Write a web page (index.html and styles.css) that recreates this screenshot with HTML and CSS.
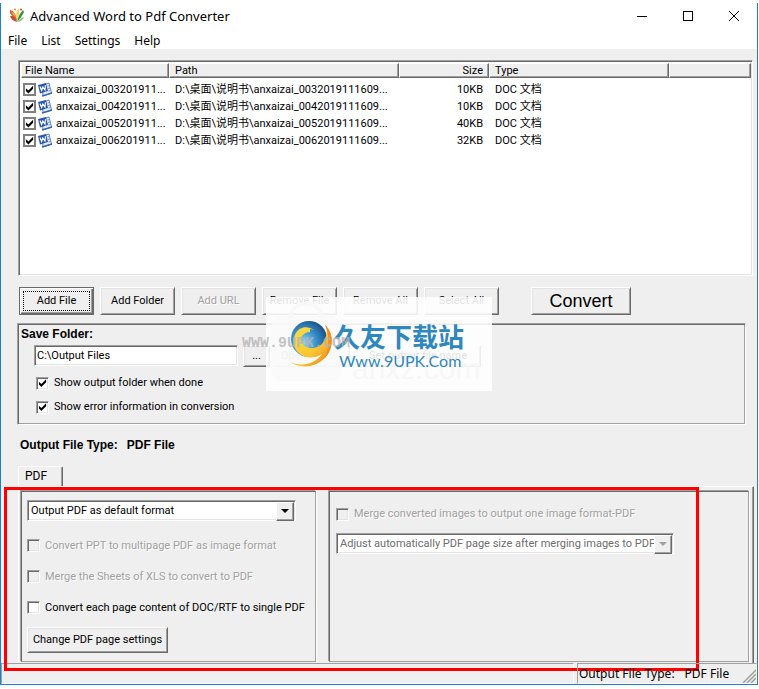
FILE: index.html
```html
<!DOCTYPE html>
<html lang="en">

<head>
    <meta charset="utf-8">
    <title>Advanced Word to Pdf Converter</title>
    <link rel="stylesheet" href="styles.css">
</head>

<body>
    <svg class="defs" width="0" height="0">
        <symbol id="word-icon" viewBox="0 0 14 15">
            <path d="M4 3 L11 1 L13.500 11 L5 14 Z" fill="#e8effa" stroke="#5f86c6"/>
            <path d="M9.500 4 L11.500 3.500 M10 6.500 L12 6 M10.500 9 L12.500 8.500" stroke="#6d94d2"/>
            <path d="M0 3 L8 1 L10 9 L2 11.500 Z" fill="#2855ab"/>
            <path d="M2 4.500 L3.600 8.500 L4.800 5 L7 8 L7.400 3.200" fill="none" stroke="#fff" stroke-width="1.200"/>
            <path d="M4 14 L14 11" stroke="#3563b4" stroke-width="1.500"/>
        </symbol>
    </svg>

    <div class="window">
        <header class="titlebar">
            <svg class="app-icon" width="16" height="16" viewBox="0 0 16 16">
                <path d="M8 14 C4 13 2 11 1 8 L4 8 C6 9 7 11 8 14 Z" fill="#d5452f"/>
                <path d="M8 13 C5 10 3 8 1 5 L1 2 L4 3 C6 6 8 9 8 13 Z" fill="#d9532f"/>
                <path d="M2 3 L5 5 L7 10 L4 7 Z" fill="#f0b13c"/>
                <path d="M8 12 C7 8 7 5 8 2 L10 1 C10 5 10 9 8 12 Z" fill="#f3d35a"/>
                <path d="M8 14 C9 9 11 5 14 2 L15 4 C13 8 11 11 8 14 Z" fill="#2f9440"/>
                <path d="M9 14 C11 11 13 10 15 9 L14 11 C12 13 10 14 9 14 Z" fill="#7bbd55"/>
                <circle cx="6" cy="1.500" r="1" fill="#e9822c"/>
                <circle cx="12" cy="1.500" r="1" fill="#d93a2b"/>
            </svg>
            <span class="title">Advanced Word to Pdf Converter</span>
            <div class="window-buttons">
                <button type="button"><svg width="12" height="12"><path d="M1 6.500 H11" stroke="#000"/></svg></button>
                <button type="button"><svg width="12" height="12"><rect x="1.500" y="1.500" width="9" height="9" fill="none" stroke="#000"/></svg></button>
                <button type="button"><svg width="12" height="12"><path d="M1 1 L11 11 M11 1 L1 11" stroke="#000"/></svg></button>
            </div>
        </header>

        <nav class="menu">
            <button type="button">File</button>
            <button type="button">List</button>
            <button type="button">Settings</button>
            <button type="button">Help</button>
        </nav>

        <main class="content">
            <div class="file-list">
                <table>
                    <colgroup>
                        <col class="col-name">
                        <col class="col-path">
                        <col class="col-size">
                        <col class="col-type">
                        <col>
                    </colgroup>
                    <thead>
                        <tr>
                            <th>File Name</th>
                            <th>Path</th>
                            <th class="num">Size</th>
                            <th>Type</th>
                            <th></th>
                        </tr>
                    </thead>
                    <tbody>
                        <tr>
                            <td><div class="file"><input type="checkbox" id="file1" checked><svg width="14" height="15"><use href="#word-icon"/></svg><label for="file1">anxaizai_003201911...</label></div></td>
                            <td>D:\桌面\说明书\anxaizai_0032019111609...</td>
                            <td class="num">10KB</td>
                            <td>DOC 文档</td>
                            <td></td>
                        </tr>
                        <tr>
                            <td><div class="file"><input type="checkbox" id="file2" checked><svg width="14" height="15"><use href="#word-icon"/></svg><label for="file2">anxaizai_004201911...</label></div></td>
                            <td>D:\桌面\说明书\anxaizai_0042019111609...</td>
                            <td class="num">10KB</td>
                            <td>DOC 文档</td>
                            <td></td>
                        </tr>
                        <tr>
                            <td><div class="file"><input type="checkbox" id="file3" checked><svg width="14" height="15"><use href="#word-icon"/></svg><label for="file3">anxaizai_005201911...</label></div></td>
                            <td>D:\桌面\说明书\anxaizai_0052019111609...</td>
                            <td class="num">40KB</td>
                            <td>DOC 文档</td>
                            <td></td>
                        </tr>
                        <tr>
                            <td><div class="file"><input type="checkbox" id="file4" checked><svg width="14" height="15"><use href="#word-icon"/></svg><label for="file4">anxaizai_006201911...</label></div></td>
                            <td>D:\桌面\说明书\anxaizai_0062019111609...</td>
                            <td class="num">32KB</td>
                            <td>DOC 文档</td>
                            <td></td>
                        </tr>
                    </tbody>
                </table>
            </div>

            <div class="toolbar">
                <button type="button" class="btn default">Add File</button>
                <button type="button" class="btn">Add Folder</button>
                <button type="button" class="btn" disabled>Add URL</button>
                <button type="button" class="btn">Remove File</button>
                <button type="button" class="btn">Remove All</button>
                <button type="button" class="btn">Select All</button>
                <button type="button" class="btn convert">Convert</button>
            </div>

            <section class="save-box">
                <label class="heading" for="folder">Save Folder:</label>
                <div class="folder-row">
                    <input type="text" id="folder" value="C:\Output Files">
                    <button type="button" class="btn browse">...</button>
                    <button type="button" class="btn open">Open</button>
                    <button type="button" class="btn set-name">Set output file name</button>
                </div>
                <label class="check"><input type="checkbox" checked>Show output folder when done</label>
                <label class="check"><input type="checkbox" checked>Show error information in conversion</label>

                <svg class="watermark" width="250" height="94" viewBox="0 0 250 94">
                    <defs>
                        <radialGradient id="globe" cx="0.350" cy="0.600" r="0.700">
                            <stop offset="0" stop-color="#8fd4f3"/>
                            <stop offset="0.500" stop-color="#3a92cc"/>
                            <stop offset="1" stop-color="#174b86"/>
                        </radialGradient>
                        <linearGradient id="swoosh" x1="0" y1="0" x2="1" y2="1">
                            <stop offset="0" stop-color="#fbe04a"/>
                            <stop offset="0.600" stop-color="#f9c52e"/>
                            <stop offset="1" stop-color="#ea7a1c"/>
                        </linearGradient>
                    </defs>
                    <rect x="24" y="0" width="226" height="94" fill="#fff" fill-opacity="0.880"/>
                    <rect x="29" y="19" width="71" height="65" rx="12" fill="#f8f8f8" fill-opacity="0.700"/>
                    <path d="M48 22 C48 2 80 2 80 22" fill="none" stroke="#f8f8f8" stroke-width="4"/>
                    <text x="110" y="82" class="ghost">anxz.com</text>
                    <circle cx="67" cy="42" r="18" fill="url(#globe)"/>
                    <path d="M53 51 C48 36 60 25 72 33 C62 29 55 38 60 46 C65 54 78 52 82 44 C86 37 85 31 83 28 C92 36 92 51 83 61 C72 72 57 71 48 65 C60 70 73 67 80 57 C70 64 57 60 53 51 Z" fill="url(#swoosh)"/>
                    <path d="M83 28 C92 36 92 51 83 61 C88 49 87 37 83 28 Z" fill="#f28b20"/>
                    <path d="M56 49 C55 40 60 33 68 33" fill="none" stroke="#f9d640" stroke-width="4"/>
                    <text x="92" y="50" class="brand">久友下载站</text>
                    <text x="97" y="70" class="site">Www.9UPK.Com</text>
                    <text x="0" y="50" class="stamp">WWW.9UPK.COM</text>
                </svg>
            </section>

            <div class="output-type"><span>Output File Type:</span><span>PDF File</span></div>

            <div class="tabs"><button type="button" class="tab">PDF</button></div>

            <div class="pane">
                <section class="group left">
                    <div class="combo">
                        <select>
                            <option>Output PDF as default format</option>
                        </select>
                    </div>
                    <label class="check"><input type="checkbox" disabled>Convert PPT to multipage PDF as image format</label>
                    <label class="check"><input type="checkbox" disabled>Merge the Sheets of XLS to convert to PDF</label>
                    <label class="check"><input type="checkbox">Convert each page content of DOC/RTF to single PDF</label>
                    <button type="button" class="btn page-settings">Change PDF page settings</button>
                </section>
                <section class="group right">
                    <label class="check"><input type="checkbox" disabled>Merge converted images to output one image format-PDF</label>
                    <div class="combo wide">
                        <select disabled>
                            <option>Adjust automatically PDF page size after merging images to PDF</option>
                        </select>
                    </div>
                </section>
                <div class="highlight"></div>
            </div>
        </main>

        <footer class="statusbar">
            <div class="status-main"></div>
            <div class="status-type"><span>Output File Type:</span><span>PDF File</span>
                <svg class="grip" width="14" height="14"><path d="M1 14 L14 1 M5 14 L14 5 M9 14 L14 9" stroke="#a0a0a0" stroke-width="1.500"/></svg>
            </div>
        </footer>
    </div>
</body>

</html>
```

FILE: styles.css
```css
* {
    box-sizing: border-box;
}

body {
    margin: 0;
    padding: 3px 1px 4px 0;
    min-height: 100vh;
    display: flex;
    background: #fff;
    color: #000;
    font-family: Roboto, "Noto Sans CJK SC", sans-serif;
    font-size: 11px;
    line-height: 16px;
}

button,
input,
select {
    font: inherit;
    color: inherit;
    margin: 0;
}

.defs {
    position: absolute;
}

.window {
    flex: 1;
    display: flex;
    flex-direction: column;
    border: 1px solid #1e80cd;
    border-top: none;
    background: #efefef;
}

/* title bar and menu */
.titlebar {
    display: flex;
    align-items: center;
    height: 26px;
    padding-left: 8px;
    background: #fff;
}

.title {
    flex: 1;
    margin-left: 5px;
    font-family: "Noto Sans", sans-serif;
    font-size: 13px;
}

.window-buttons {
    display: flex;
}

.window-buttons button {
    display: flex;
    align-items: center;
    justify-content: center;
    width: 46px;
    height: 26px;
    padding: 0;
    border: none;
    background: none;
}

.menu {
    display: flex;
    gap: 14px;
    height: 20px;
    padding: 4px 0 0 7px;
    background: #fff;
}

.menu button {
    padding: 0;
    border: none;
    background: none;
    font-family: "Noto Sans", sans-serif;
    font-size: 12px;
}

.content {
    flex: 1;
    display: flex;
    flex-direction: column;
    padding: 11px 4px 0 17px;
}

/* file list */
.file-list {
    flex: 1;
    min-height: 160px;
    border: 1px solid;
    border-color: #a0a0a0 #fff #fff #a0a0a0;
    box-shadow: inset 1px 1px #696969, inset -1px -1px #e3e3e3;
    padding: 2px 1px 1px 2px;
    background: #fff;
}

table {
    width: 100%;
    table-layout: fixed;
    border-collapse: separate;
    border-spacing: 0;
}

.col-name {
    width: 148px;
}

.col-path {
    width: 230px;
}

.col-size {
    width: 90px;
}

.col-type {
    width: 180px;
}

th {
    height: 15px;
    padding: 0 5px;
    line-height: 13px;
    text-align: left;
    font-weight: normal;
    background: #efefef;
    border: 1px solid;
    border-color: #fff #696969 #696969 #fff;
    box-shadow: inset -1px -1px #a0a0a0;
}

th:first-child {
    padding-left: 3px;
}

td {
    height: 17px;
    padding: 0 6px;
    line-height: 17px;
    white-space: nowrap;
}

td:first-child {
    padding: 0 0 0 2px;
}

tbody::before {
    content: "";
    display: block;
    height: 3px;
}

.num {
    text-align: right;
}

.file {
    display: flex;
    align-items: center;
    gap: 4px;
}

.file svg {
    margin-left: -2px;
}

/* check boxes */
input[type="checkbox"] {
    appearance: none;
    flex: none;
    width: 13px;
    height: 13px;
    border: 1px solid;
    border-color: #a0a0a0 #fff #fff #a0a0a0;
    box-shadow: inset 1px 1px #696969, inset -1px -1px #e3e3e3;
    background: #fff;
    display: flex;
    align-items: center;
    justify-content: center;
}

input[type="checkbox"]:checked::before {
    content: "";
    width: 9px;
    height: 9px;
    background: #000;
    clip-path: polygon(10% 35%, 38% 60%, 90% 8%, 90% 42%, 38% 95%, 10% 68%);
}

input[type="checkbox"]:disabled {
    background: #efefef;
}

.file input[type="checkbox"] {
    border: 2px solid #808080;
    box-shadow: none;
}

.check {
    display: flex;
    align-items: center;
    gap: 5px;
    white-space: nowrap;
}

.check:has(:disabled) {
    color: #a0a0a0;
    text-shadow: 1px 1px #fff;
}

/* buttons */
.btn {
    padding: 0;
    background: #efefef;
    border: 1px solid;
    border-color: #fff #696969 #696969 #fff;
    box-shadow: inset 1px 1px #e3e3e3, inset -1px -1px #a0a0a0;
    white-space: nowrap;
}

.btn:disabled {
    color: #a0a0a0;
    text-shadow: 1px 1px #fff;
}

.toolbar {
    display: flex;
    gap: 6px;
    margin-top: 11px;
    padding-left: 1px;
}

.toolbar .btn {
    width: 75px;
    height: 28px;
}

.toolbar .default {
    border-color: #696969;
    box-shadow: inset 1px 1px #fff, inset -1px -1px #696969, inset -2px -2px #a0a0a0;
    outline: 1px dotted #000;
    outline-offset: -5px;
}

.toolbar .convert {
    width: 100px;
    margin-left: 26px;
    font-family: "Liberation Sans", sans-serif;
    font-size: 18px;
}

/* save folder */
.save-box {
    position: relative;
    margin: 8px 7px 0 -1px;
    padding: 2px 3px 5px;
    border: 1px solid;
    border-color: #a0a0a0 #fff #fff #a0a0a0;
    box-shadow: inset 1px 1px #696969, inset -1px -1px #a0a0a0;
}

.heading {
    display: block;
    font-family: "Liberation Sans", sans-serif;
    font-size: 12px;
    font-weight: bold;
}

.folder-row {
    display: flex;
    align-items: flex-start;
    gap: 5px;
    margin: 3px 0 4px 13px;
}

.folder-row input {
    width: 204px;
    height: 21px;
    padding: 0 2px;
    border: 1px solid;
    border-color: #a0a0a0 #fff #fff #a0a0a0;
    box-shadow: inset 1px 1px #696969, inset -1px -1px #e3e3e3;
    background: #fff;
}

.folder-row .btn {
    height: 22px;
}

.folder-row .browse {
    width: 27px;
}

.folder-row .open {
    width: 75px;
    padding-left: 5px;
    text-align: left;
}

.folder-row .set-name {
    width: 126px;
}

.save-box .check {
    height: 24px;
    margin-left: 15px;
}

.watermark {
    position: absolute;
    left: 224px;
    top: -27px;
    pointer-events: none;
}

.ghost {
    font-family: "Liberation Sans", sans-serif;
    font-size: 30px;
    fill: #f7f7f7;
}

.brand {
    font-family: "Noto Sans CJK SC", sans-serif;
    font-size: 26px;
    font-weight: bold;
    fill: #2f88bd;
}

.site {
    font-family: Lato, sans-serif;
    font-size: 16px;
    fill: #2f88bd;
}

.stamp {
    font-family: "Liberation Mono", monospace;
    font-size: 15px;
    font-weight: bold;
    fill: #b4b4b4;
    fill-opacity: 0.8;
}

.output-type {
    display: flex;
    gap: 9px;
    margin: 12px 0 13px 2px;
    font-family: "Liberation Sans", sans-serif;
    font-size: 12px;
    font-weight: bold;
}

/* tab control */
.tab {
    display: block;
    width: 45px;
    height: 20px;
    padding: 0 0 2px 6px;
    text-align: left;
    font-size: 12px;
    background: #efefef;
    border: 1px solid;
    border-color: #fff #696969 transparent #fff;
    border-bottom: none;
    border-radius: 2px 2px 0 0;
    box-shadow: inset -1px 0 #a0a0a0;
}

.pane {
    position: relative;
    display: flex;
    gap: 13px;
    height: 177px;
    margin-right: -1px;
    padding: 4px 4px 1px 2px;
    border: 1px solid;
    border-color: #fff #696969 transparent #fff;
    border-bottom: none;
    box-shadow: inset -1px 0 #a0a0a0;
}

.group {
    border: 1px solid;
    border-color: #696969 #a0a0a0 #a0a0a0 #696969;
    box-shadow: 1px 0 #fff, -1px -1px #a0a0a0;
}

.left {
    width: 295px;
    padding: 8px 5px;
}

.left .combo {
    margin-bottom: 9px;
}

.left .check {
    height: 31px;
}

.right {
    flex: 1;
    padding: 14px 6px;
}

.right .combo {
    margin-top: 11px;
}

.combo {
    position: relative;
    width: 269px;
}

.combo.wide {
    width: 338px;
}

.combo select {
    appearance: none;
    display: block;
    width: 100%;
    height: 21px;
    padding: 0 16px 0 3px;
    border: 1px solid;
    border-color: #a0a0a0 #fff #fff #a0a0a0;
    border-radius: 0;
    box-shadow: inset 1px 1px #696969, inset -1px -1px #e3e3e3;
    background: #fff;
}

.combo select:disabled {
    color: #6d6d6d;
    opacity: 1;
}

/* drop-down arrow button */
.combo::before {
    content: "";
    position: absolute;
    right: 2px;
    top: 2px;
    width: 16px;
    height: 17px;
    background: #efefef;
    border: 1px solid;
    border-color: #fff #696969 #696969 #fff;
    box-shadow: inset -1px -1px #a0a0a0;
    pointer-events: none;
}

.combo::after {
    content: "";
    position: absolute;
    right: 7px;
    top: 9px;
    border: 4px solid transparent;
    border-top-color: #000;
    border-bottom: none;
    pointer-events: none;
}

.combo.wide::after {
    border-top-color: #a0a0a0;
}

.page-settings {
    width: 141px;
    height: 26px;
    margin-top: 4px;
}

.highlight {
    position: absolute;
    left: -15px;
    top: 0;
    width: 695px;
    height: 184px;
    border: 3px solid #f00;
    pointer-events: none;
}

/* status bar */
.statusbar {
    display: flex;
    gap: 3px;
    height: 21px;
    font-family: "Noto Sans", sans-serif;
    font-size: 12px;
}

.status-main,
.status-type {
    border: 1px solid;
    border-color: #a0a0a0 #fff #fff #a0a0a0;
}

.status-main {
    flex: 1;
}

.status-type {
    position: relative;
    display: flex;
    gap: 10px;
    width: 180px;
    padding: 2px 1px 1px;
    white-space: nowrap;
}

.grip {
    position: absolute;
    right: 0;
    bottom: 0;
}
```
